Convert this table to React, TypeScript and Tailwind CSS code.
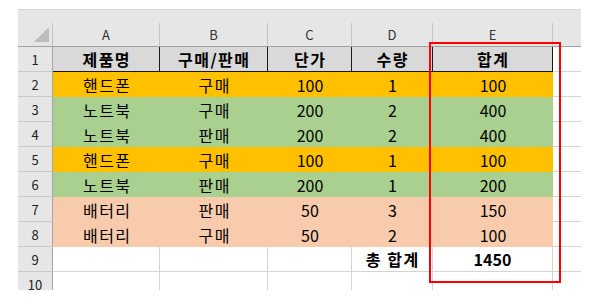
import React from 'react'

const cols = 'grid grid-cols-[35px_107px_108px_84px_81px_120px_28px]'
const font = { fontFamily: '"Noto Sans CJK KR", "Noto Sans", sans-serif' }

type Row = { n: number; cells: string[]; bg: string }

const rows: Row[] = [
  { n: 2, cells: ['핸드폰', '구매', '100', '1', '100'], bg: 'bg-[#ffc000]' },
  { n: 3, cells: ['노트북', '구매', '200', '2', '400'], bg: 'bg-[#a9d08e]' },
  { n: 4, cells: ['노트북', '판매', '200', '2', '400'], bg: 'bg-[#a9d08e]' },
  { n: 5, cells: ['핸드폰', '구매', '100', '1', '100'], bg: 'bg-[#ffc000]' },
  { n: 6, cells: ['노트북', '판매', '200', '1', '200'], bg: 'bg-[#a9d08e]' },
  { n: 7, cells: ['배터리', '판매', '50', '3', '150'], bg: 'bg-[#f8cbad]' },
  { n: 8, cells: ['배터리', '구매', '50', '2', '100'], bg: 'bg-[#f8cbad]' },
]

// hangul in the reference is set a little wider than Noto
const kr = (s: string) => (/[가-힣]/.test(s) ? 'tracking-[1.5px] pl-[1.5px]' : '')

const RowHead: React.FC<{ n: number }> = ({ n }) => (
  <div className="flex items-center justify-center bg-[#e6e6e6] border-r border-b border-r-[#a6a6a6] border-b-[#c8c8c8] text-[13px] text-[#222]">
    {n}
  </div>
)

const App: React.FC = () => {
  const headers = ['제품명', '구매/판매', '단가', '수량', '합계']
  const letters = ['A', 'B', 'C', 'D', 'E']

  return (
    <div className="relative w-[599px] h-[307px] bg-white pt-[9px] pl-[18px] overflow-hidden" style={font}>
      <div className="w-[563px]">
        {/* top strip */}
        <div className="h-[14px] bg-[#e6e6e6] border-t border-[#d6d6d6]" />

        {/* column letters */}
        <div className={`${cols} h-[24px] bg-[#e6e6e6] border-b border-[#9f9f9f]`}>
          <div className="relative border-r border-[#c4c4c4]">
            <svg width="16" height="16" className="absolute left-[16px] top-[4px]">
              <polygon points="15,0 15,15 0,15" fill="#bcbcbc" />
            </svg>
          </div>
          {letters.map((l) => (
            <div key={l} className="flex items-center justify-center border-r border-[#c4c4c4] text-[13px] text-[#333]">
              {l}
            </div>
          ))}
          <div />
        </div>

        {/* row 1 */}
        <div className={`${cols} h-[25px] leading-none text-[16px] text-black`}>
          <RowHead n={1} />
          {headers.map((h) => (
            <div key={h} className={`flex items-center justify-center bg-[#d9d9d9] font-bold border-r border-b border-[#1a1a1a] ${kr(h)}`}>
              {h}
            </div>
          ))}
          <div className="border-b border-[#d4d4d4]" />
        </div>

        {/* data rows */}
        {rows.map((r) => (
          <div key={r.n} className={`${cols} h-[25px] leading-none text-[16px] text-black`}>
            <RowHead n={r.n} />
            {r.cells.map((c, i) => (
              <div key={i} className={`flex items-center justify-center ${r.bg} ${kr(c)}`}>
                {c}
              </div>
            ))}
            <div className="border-b border-[#d4d4d4]" />
          </div>
        ))}

        {/* row 9 */}
        <div className={`${cols} h-[25px] leading-none text-[16px] text-black`}>
          <RowHead n={9} />
          <div className="border-r border-b border-[#d4d4d4]" />
          <div className="border-r border-b border-[#d4d4d4]" />
          <div className="border-r border-b border-[#d4d4d4]" />
          <div className="flex items-center justify-center font-bold border-r border-b border-[#d4d4d4] tracking-[1.5px] pl-[1.5px]">총 합계</div>
          <div className="flex items-center justify-center font-bold border-r border-b border-[#d4d4d4]">1450</div>
          <div className="border-b border-[#d4d4d4]" />
        </div>

        {/* row 10, cut off */}
        <div className="h-[18px] overflow-hidden">
          <div className={`${cols} h-[25px] leading-none text-[16px]`}>
            <RowHead n={10} />
            <div className="border-r border-[#d4d4d4]" />
            <div className="border-r border-[#d4d4d4]" />
            <div className="border-r border-[#d4d4d4]" />
            <div className="border-r border-[#d4d4d4]" />
            <div className="border-r border-[#d4d4d4]" />
            <div />
          </div>
        </div>
      </div>

      {/* red highlight */}
      <div className="absolute left-[429px] top-[42px] w-[132px] h-[241px] border-2 border-[#ff0000] pointer-events-none" />
    </div>
  )
}

export default App
